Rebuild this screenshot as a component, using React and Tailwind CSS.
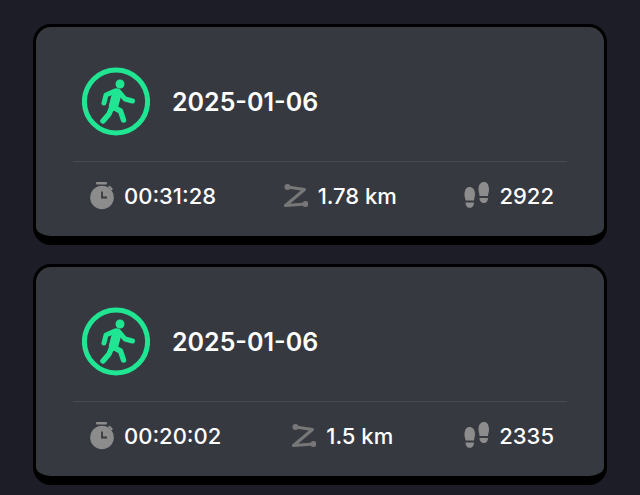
const sessions = [
  { date: "2025-01-06", time: "00:31:28", distance: "1.78 km", steps: "2922" },
  { date: "2025-01-06", time: "00:20:02", distance: "1.5 km", steps: "2335" },
];

function WalkIcon() {
  return (
    <svg width="68" height="69" viewBox="0 0 68 69" fill="none" stroke="#20e592" strokeLinecap="round" strokeLinejoin="round">
      <circle cx="34" cy="34.500" r="31.600" strokeWidth="5" />
      <circle cx="38" cy="17" r="4.500" fill="#20e592" stroke="none" />
      <path d="M35 26 L31.500 39" strokeWidth="9.500" />
      <path d="M33 24 L24 28 L22 36" strokeWidth="5" />
      <path d="M38 26 L43 32 L50.500 34" strokeWidth="5" />
      <path d="M31 40 L38.500 44 L41.500 53" strokeWidth="5.500" />
      <path d="M30 40 L27 47 L21 54" strokeWidth="5.500" />
    </svg>
  );
}

function TimerIcon() {
  return (
    <svg width="24" height="28" viewBox="0 0 24 28" fill="none">
      <rect x="6" y="0" width="11" height="2.600" rx="1" fill="#8c8c8c" />
      <circle cx="12" cy="15.500" r="11.800" fill="#8c8c8c" />
      <path d="M19.500 5 L21.500 7" stroke="#8c8c8c" strokeWidth="2.400" strokeLinecap="round" />
      <path d="M12 9.500 V15.500 H17" stroke="#363940" strokeWidth="1.800" />
    </svg>
  );
}

function RouteIcon() {
  return (
    <svg width="24" height="28" viewBox="0 0 24 28" fill="none">
      <path d="M3.500 5 L20.500 7.500 L1.500 23.500 L22 22" stroke="#777777" strokeWidth="3" strokeLinejoin="round" strokeLinecap="round" />
      <circle cx="3.500" cy="5" r="3" fill="#777777" />
      <circle cx="21.500" cy="22" r="3" fill="#777777" />
    </svg>
  );
}

function StepsIcon() {
  return (
    <svg width="25" height="28" viewBox="0 0 25 28" fill="#8c8c8c">
      <path d="M0.500 13 C0.500 7.500 2.500 5 5.500 5 C8.500 5 11 7.500 11 12 C11 15.500 10 16.500 10 18.500 H1.500 C1.500 16.500 0.500 15.500 0.500 13 Z" />
      <path d="M1.500 20.500 H10 C10 23.500 8.500 25.800 5.500 25.800 C3 25.800 1.500 23.500 1.500 20.500 Z" />
      <path d="M25 8 C25 2.500 23 0 20 0 C17 0 14.500 2.500 14.500 7 C14.500 10.500 15.500 11.500 15.500 14 H24 C24 11.500 25 10.500 25 8 Z" />
      <path d="M15.500 16 H24 C24 19 22.500 21 20 21 C17.500 21 15.500 19 15.500 16 Z" />
    </svg>
  );
}

function Stat({ icon, value }) {
  return (
    <div className="flex items-center gap-[10px]">
      {icon}
      <span className="text-[22px] font-medium leading-7 text-white">{value}</span>
    </div>
  );
}

function SessionCard({ session }) {
  return (
    <div className="rounded-[18px] border-[3px] border-b-[9px] border-black bg-[#363940]">
      <div className="flex items-center gap-[22px] pl-[46px] pt-[40px] pb-[25px]">
        <WalkIcon />
        <span className="text-[25px] font-semibold leading-8 text-white">{session.date}</span>
      </div>
      <div className="mx-[37px] flex justify-between border-t border-[#474a50] pl-[17px] pr-[13px] pt-[20px] pb-[26px]">
        <Stat icon={<TimerIcon />} value={session.time} />
        <Stat icon={<RouteIcon />} value={session.distance} />
        <Stat icon={<StepsIcon />} value={session.steps} />
      </div>
    </div>
  );
}

export default function App() {
  return (
    <div className="flex h-[495px] flex-col gap-[19px] overflow-hidden bg-[#1c1d27] px-[33px] pt-[24px] font-['Inter',sans-serif]">
      {sessions.map((session, i) => (
        <SessionCard key={i} session={session} />
      ))}
    </div>
  );
}
